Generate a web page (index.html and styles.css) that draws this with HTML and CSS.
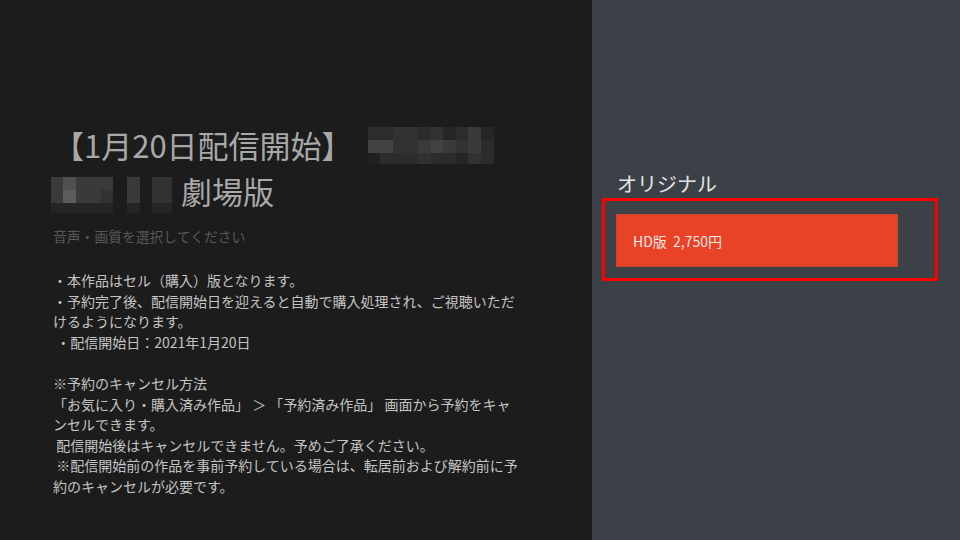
FILE: index.html
```html
<!DOCTYPE html>
<html lang="ja">
<head>
    <meta charset="utf-8">
    <link rel="stylesheet" href="styles.css">
</head>
<body>
    <div id="screen">
        <div id="detail">
            <h1 class="title">【1月20日配信開始】<span class="mosaic mosaic-wide">
                    <span class="s2"></span><span class="s2"></span><span class="s3"></span><span class="s3"></span><span class="s2"></span><span class="s3"></span><span class="s1"></span><span class="s2"></span><span class="s4"></span><span class="s1"></span>
                    <span class="s5"></span><span class="s5"></span><span class="s3"></span><span class="s3"></span><span class="s4"></span><span class="s5"></span><span class="s4"></span><span class="s3"></span><span class="s4"></span><span class="s2"></span>
                    <span class="s0"></span><span class="s2"></span><span class="s2"></span><span class="s2"></span><span class="s3"></span><span class="s2"></span><span class="s2"></span><span class="s1"></span><span class="s3"></span><span class="s2"></span>
                </span><br><span class="mosaic mosaic-a">
                    <span class="s4"></span><span class="s6"></span><span class="s4"></span><span class="s4"></span><span class="s4"></span>
                    <span class="s4"></span><span class="s7"></span><span class="s4"></span><span class="s4"></span><span class="s3"></span>
                    <span class="s1"></span><span class="s1"></span><span class="s1"></span><span class="s1"></span><span class="s1"></span>
                </span><span class="mosaic mosaic-b">
                    <span class="s4"></span><span class="s4"></span><span class="s1"></span>
                </span><span class="mosaic mosaic-c">
                    <span class="s3"></span><span class="s3"></span><span class="s1"></span>
                </span>劇場版</h1>
            <p class="hint">音声・画質を選択してください</p>
            <div class="notes">
                <p>・本作品はセル（購入）版となります。<br>・予約完了後、配信開始日を迎えると自動で購入処理され、ご視聴いただけるようになります。<br>&nbsp;・配信開始日：2021年1月20日</p>
                <p>※予約のキャンセル方法<br>「お気に入り・購入済み作品」 ＞ 「予約済み作品」 画面から予約をキャンセルできます。<br>&nbsp;配信開始後はキャンセルできません。予めご了承ください。<br>&nbsp;※配信開始前の作品を事前予約している場合は、転居前および解約前に予約のキャンセルが必要です。</p>
            </div>
        </div>
        <div id="options">
            <h2 class="group-title">オリジナル</h2>
            <div class="focus-frame">
                <div class="buy-button">HD版&nbsp;&nbsp;2,750円</div>
            </div>
        </div>
    </div>
</body>
</html>
```

FILE: styles.css
```css
body{
    margin: 0;
    font-family: "Noto Sans CJK JP", "Noto Sans", sans-serif;
}

#screen{
    display: flex;
    width: 960px;
    height: 540px;
    overflow: hidden;
}

#detail{
    width: 592px;
    box-sizing: border-box;
    padding: 122px 0 0 53px;
    background-color: rgb(28, 28, 28);
}

#options{
    flex: 1;
    padding: 170px 0 0 10px;
    background-color: rgb(60, 64, 71);
}

.title{
    margin: 0;
    font-size: 31px;
    font-weight: normal;
    line-height: 46px;
    color: rgb(168, 168, 168);
    white-space: nowrap;
}

/* pixelated (blurred) part of the title */
.mosaic{
    display: inline-grid;
    vertical-align: top;
    margin-top: 9px;
}

.mosaic span{
    display: block;
}

.mosaic-wide{
    grid-template-columns: repeat(10, 12.6px);
    grid-template-rows: 13px 13px 11px;
    margin-left: 15px;
    margin-top: 5px;
}

.mosaic-a{
    grid-template-columns: repeat(5, 12.4px);
    grid-template-rows: 13px 13px 10px;
    margin-left: -2px;
}

.mosaic-b{
    grid-template-columns: 13px;
    grid-template-rows: 13px 13px 10px;
    margin-left: 14px;
}

.mosaic-c{
    grid-template-columns: 20px;
    grid-template-rows: 13px 13px 10px;
    margin-left: 12px;
    margin-right: 9px;
}

.s0{ background-color: rgb(32, 32, 32); }
.s1{ background-color: rgb(37, 37, 37); }
.s2{ background-color: rgb(44, 44, 44); }
.s3{ background-color: rgb(50, 50, 50); }
.s4{ background-color: rgb(58, 58, 58); }
.s5{ background-color: rgb(66, 66, 66); }
.s6{ background-color: rgb(80, 80, 80); }
.s7{ background-color: rgb(92, 92, 92); }

.hint{
    margin: 12px 0 0 0;
    font-size: 13.8px;
    line-height: 20px;
    color: rgb(88, 88, 88);
}

.notes{
    width: 465px;
    margin-top: 24px;
    font-size: 14px;
    line-height: 20.6px;
    color: rgb(196, 196, 196);
}

.notes p{
    margin: 0 0 20.6px 0;
}

.group-title{
    margin: 0 0 0 15px;
    font-size: 20px;
    font-weight: normal;
    line-height: 28px;
    color: rgb(228, 228, 228);
}

.focus-frame{
    width: 336px;
    box-sizing: border-box;
    border: 3px solid rgb(255, 0, 0);
    padding: 13px 0 11px 11px;
}

.buy-button{
    width: 282px;
    height: 53px;
    box-sizing: border-box;
    padding-left: 16px;
    display: flex;
    align-items: center;
    background-color: rgb(232, 67, 39);
    border: 1px solid rgb(200, 70, 50);
    font-size: 14px;
    color: rgb(245, 232, 228);
}
```
